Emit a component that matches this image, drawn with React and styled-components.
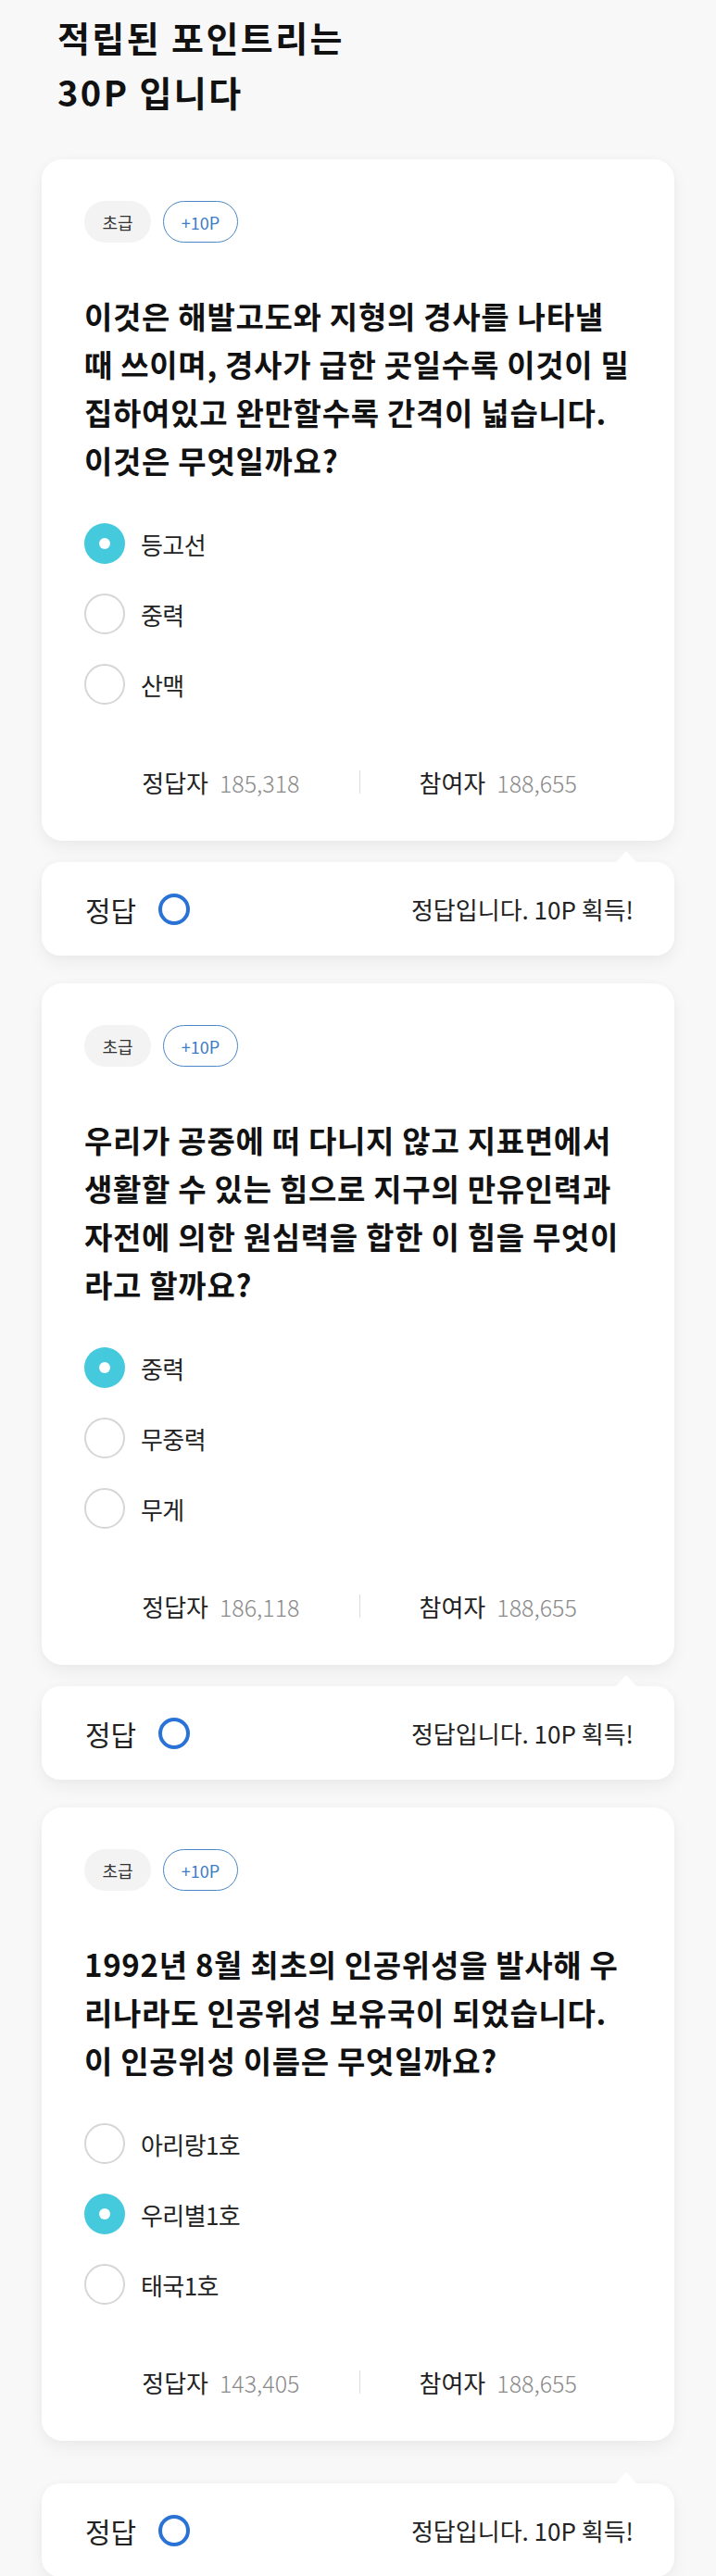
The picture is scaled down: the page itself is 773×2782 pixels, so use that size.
import React from "react";
import styled, { createGlobalStyle, css } from "styled-components";

const GlobalStyle = createGlobalStyle`
  * { box-sizing: border-box; }
  body {
    margin: 0;
    background: #f8f8f8;
    font-family: "Noto Sans CJK KR", "Noto Sans", sans-serif;
    color: #111;
  }
`;

const quizzes = [
  {
    question:
      "이것은 해발고도와 지형의 경사를 나타낼 때 쓰이며, 경사가 급한 곳일수록 이것이 밀집하여있고 완만할수록 간격이 넓습니다. 이것은 무엇일까요?",
    options: ["등고선", "중력", "산맥"],
    picked: 0,
    correct: "185,318",
    total: "188,655",
    gap: 23,
  },
  {
    question:
      "우리가 공중에 떠 다니지 않고 지표면에서 생활할 수 있는 힘으로 지구의 만유인력과 자전에 의한 원심력을 합한 이 힘을 무엇이라고 할까요?",
    options: ["중력", "무중력", "무게"],
    picked: 0,
    correct: "186,118",
    total: "188,655",
    gap: 23,
  },
  {
    question:
      "1992년 8월 최초의 인공위성을 발사해 우리나라도 인공위성 보유국이 되었습니다. 이 인공위성 이름은 무엇일까요?",
    options: ["아리랑1호", "우리별1호", "태국1호"],
    picked: 1,
    correct: "143,405",
    total: "188,655",
    gap: 46,
  },
];

const Page = styled.main`
  display: flex;
  flex-direction: column;
  gap: 30px;
  padding: 10px 45px 0;
`;

const Title = styled.h1`
  margin: 0 0 14px;
  padding-left: 17px;
  font-size: 38px;
  line-height: 59px;
  font-weight: 700;
  letter-spacing: 2.4px;
  color: #111;
`;

const Quiz = styled.section`
  display: flex;
  flex-direction: column;
`;

const Card = styled.div`
  background: #fff;
  border-radius: 22px;
  padding: 45px 43px 47px 46px;
  box-shadow: 0 8px 18px rgba(0, 0, 0, 0.05), 0 0 10px rgba(0, 0, 0, 0.025);
`;

const ChipRow = styled.div`
  display: flex;
  gap: 13px;
`;

const Chip = styled.span`
  display: inline-flex;
  align-items: center;
  justify-content: center;
  height: 45px;
  border-radius: 23px;
  ${({ $outline }) =>
    $outline
      ? css`
          width: 81px;
          border: 1.5px solid #4a86c8;
          color: #3d7bc4;
          font-size: 18px;
        `
      : css`
          width: 72px;
          background: #f3f3f3;
          color: #333;
          font-size: 18px;
        `}
`;

const Question = styled.p`
  margin: 53px 0 42px;
  font-size: 33px;
  line-height: 52px;
  font-weight: 700;
  letter-spacing: 0.7px;
  color: #111;
`;

const Options = styled.ul`
  display: flex;
  flex-direction: column;
  gap: 32px;
  margin: 0;
  padding: 0;
  list-style: none;
`;

const Option = styled.li`
  display: flex;
  align-items: center;
  gap: 17px;
  height: 44px;
  font-size: 26px;
  letter-spacing: -0.6px;
  color: #222;
`;

const Radio = styled.span`
  flex: none;
  display: flex;
  align-items: center;
  justify-content: center;
  width: 44px;
  height: 44px;
  border-radius: 50%;
  ${({ $checked }) =>
    $checked
      ? css`
          background: #45c9dc;
          &::after {
            content: "";
            width: 12px;
            height: 12px;
            border-radius: 50%;
            background: #fff;
          }
        `
      : css`
          background: #fff;
          border: 2px solid #d6d6d6;
        `}
`;

const Stats = styled.div`
  display: flex;
  justify-content: center;
  align-items: center;
  margin-top: 66px;
  height: 34px;
`;

const Stat = styled.span`
  display: flex;
  align-items: baseline;
  gap: 12px;
  font-size: 26px;
  color: #222;
`;

const Count = styled.span`
  font-size: 25px;
  font-weight: 300;
  color: #8a8a8a;
`;

const Divider = styled.span`
  width: 1px;
  height: 25px;
  margin: 0 64px;
  background: #dcdcdc;
`;

const Answer = styled.div`
  position: relative;
  display: flex;
  align-items: center;
  justify-content: space-between;
  height: 101px;
  margin-top: ${({ $gap }) => $gap}px;
  padding: 0 44px 0 47px;
  background: #fff;
  border-radius: 20px;
  box-shadow: 0 8px 18px rgba(0, 0, 0, 0.05), 0 0 10px rgba(0, 0, 0, 0.025);

  &::before {
    content: "";
    position: absolute;
    top: -12px;
    right: 41px;
    border-left: 11px solid transparent;
    border-right: 11px solid transparent;
    border-bottom: 12px solid #fff;
  }
`;

const AnswerLabel = styled.span`
  display: flex;
  align-items: center;
  gap: 24px;
  font-size: 30px;
  color: #222;
`;

const Ring = styled.span`
  width: 34px;
  height: 34px;
  border: 4px solid #2a73d6;
  border-radius: 50%;
`;

const AnswerText = styled.span`
  font-size: 26px;
  color: #222;
`;

const QuizItem = ({ quiz }) => (
  <Quiz>
    <Card>
      <ChipRow>
        <Chip>초급</Chip>
        <Chip $outline>+10P</Chip>
      </ChipRow>
      <Question>{quiz.question}</Question>
      <Options>
        {quiz.options.map((opt, i) => (
          <Option key={opt}>
            <Radio $checked={i === quiz.picked} />
            {opt}
          </Option>
        ))}
      </Options>
      <Stats>
        <Stat>
          정답자 <Count>{quiz.correct}</Count>
        </Stat>
        <Divider />
        <Stat>
          참여자 <Count>{quiz.total}</Count>
        </Stat>
      </Stats>
    </Card>
    <Answer $gap={quiz.gap}>
      <AnswerLabel>
        정답 <Ring />
      </AnswerLabel>
      <AnswerText>정답입니다. 10P 획득!</AnswerText>
    </Answer>
  </Quiz>
);

export default function App() {
  return (
    <>
      <GlobalStyle />
      <Page>
        <Title>
          적립된 포인트리는
          <br />
          30P 입니다
        </Title>
        {quizzes.map((q) => (
          <QuizItem key={q.correct} quiz={q} />
        ))}
      </Page>
    </>
  );
}
